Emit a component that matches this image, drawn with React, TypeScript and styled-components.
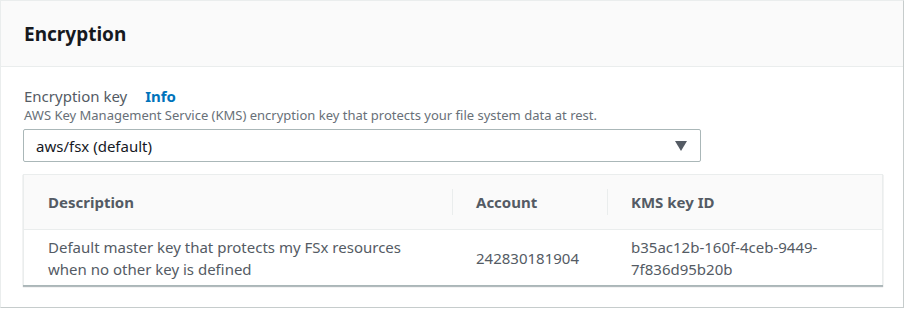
import styled, { createGlobalStyle } from "styled-components";

const GlobalStyle = createGlobalStyle`
    body {
        margin: 0;
        background: #ffffff;
        font-family: "Noto Sans", "Open Sans", Arial, sans-serif;
        color: #16191f;
    }
`;

const StyledCard = styled.section`
    width: 904px;
    box-sizing: border-box;
    border: 1px solid #eaeded;
    border-right-color: #c6cccc;
    border-bottom-color: #c6cccc;
    background: #ffffff;
`;

const StyledHeader = styled.header`
    height: 66px;
    box-sizing: border-box;
    display: flex;
    align-items: center;
    padding: 0 23px;
    background: #fafafa;
    border-bottom: 1px solid #eaeded;
`;

const StyledTitle = styled.h2`
    margin: 0;
    font-size: 19px;
    font-weight: 700;
    color: #16191f;
`;

const StyledBody = styled.div`
    padding: 18px 22px 21px;
`;

const StyledLabelRow = styled.div`
    display: flex;
    align-items: baseline;
    gap: 18px;
    font-size: 15px;
    line-height: 22px;
    padding-left: 1px;
`;

const StyledLabel = styled.span`
    color: #545b64;
`;

const StyledInfo = styled.a`
    color: #0073bb;
    font-weight: 700;
    text-decoration: none;
`;

const StyledHint = styled.p`
    margin: 0;
    padding-left: 1px;
    font-size: 13px;
    line-height: 16px;
    color: #687078;
`;

const StyledSelect = styled.div`
    margin-top: 6px;
    width: 678px;
    height: 33px;
    box-sizing: border-box;
    display: flex;
    align-items: center;
    justify-content: space-between;
    padding: 0 13px 0 12px;
    border: 1px solid #aab7b8;
    border-radius: 2px;
    font-size: 15px;
    color: #16191f;
`;

const StyledCaret = styled.svg`
    width: 12px;
    height: 10px;
    fill: #545b64;
`;

const StyledTable = styled.table`
    margin-top: 12px;
    width: 860px;
    table-layout: fixed;
    border-collapse: collapse;
    border: 1px solid #eaeded;
    border-bottom-color: #aab7b8;
    box-shadow: 0 1px 1px 0 rgba(0, 28, 36, 0.3);
    font-size: 15px;
    line-height: 22px;
    color: #545b64;
`;

const StyledHeadRow = styled.tr`
    background: #fafafa;
    border-bottom: 1px solid #eaeded;
`;

// widths are content widths, the 24px padding on each side comes on top
const StyledTh = styled.th<{ $width: number; $divider?: boolean }>`
    position: relative;
    width: ${(p) => p.$width}px;
    height: 54px;
    padding: 0 24px;
    text-align: left;
    font-weight: 700;
    color: #545b64;

    &::before {
        content: "";
        display: ${(p) => (p.$divider ? "block" : "none")};
        position: absolute;
        left: 0;
        top: 14px;
        bottom: 14px;
        border-left: 1px solid #eaeded;
    }
`;

const StyledTd = styled.td`
    height: 55px;
    padding: 0 24px;
    vertical-align: middle;
`;

const App = () => {
    return (
        <>
            <GlobalStyle />
            <StyledCard>
                <StyledHeader>
                    <StyledTitle>Encryption</StyledTitle>
                </StyledHeader>
                <StyledBody>
                    <StyledLabelRow>
                        <StyledLabel>Encryption key</StyledLabel>
                        <StyledInfo href="#">Info</StyledInfo>
                    </StyledLabelRow>
                    <StyledHint>
                        AWS Key Management Service (KMS) encryption key that
                        protects your file system data at rest.
                    </StyledHint>
                    <StyledSelect>
                        <span>aws/fsx (default)</span>
                        <StyledCaret viewBox="0 0 12 10">
                            <polygon points="0,0 12,0 6,10" />
                        </StyledCaret>
                    </StyledSelect>
                    <StyledTable>
                        <thead>
                            <StyledHeadRow>
                                <StyledTh $width={380}>Description</StyledTh>
                                <StyledTh $width={107} $divider>
                                    Account
                                </StyledTh>
                                <StyledTh $width={227} $divider>
                                    KMS key ID
                                </StyledTh>
                            </StyledHeadRow>
                        </thead>
                        <tbody>
                            <tr>
                                <StyledTd>
                                    Default master key that protects my FSx
                                    resources when no other key is defined
                                </StyledTd>
                                <StyledTd>242830181904</StyledTd>
                                <StyledTd>
                                    b35ac12b-160f-4ceb-9449-7f836d95b20b
                                </StyledTd>
                            </tr>
                        </tbody>
                    </StyledTable>
                </StyledBody>
            </StyledCard>
        </>
    );
};

export default App;
